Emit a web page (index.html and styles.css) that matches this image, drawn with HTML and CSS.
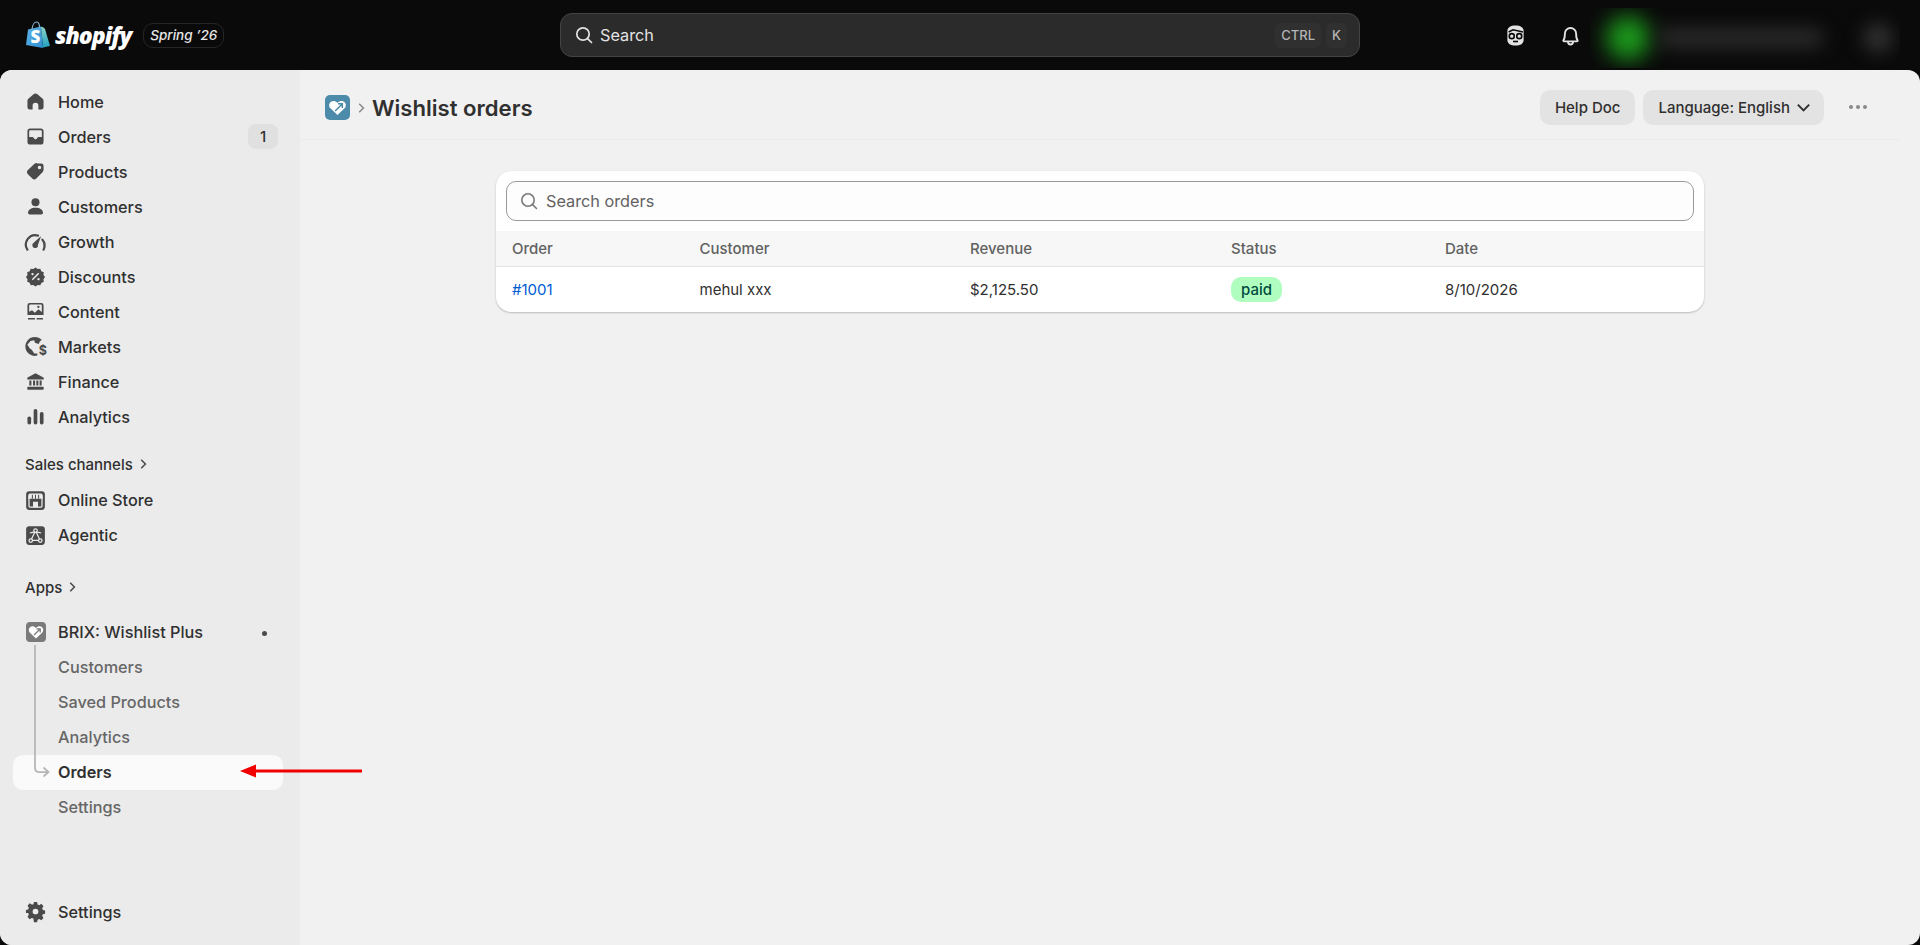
FILE: index.html
```html
<!DOCTYPE html>
<html lang="en">
<head>
    <meta charset="UTF-8">
    <meta name="viewport" content="width=device-width, initial-scale=1.0">
    <title>Wishlist orders</title>
    <link rel="stylesheet" href="styles.css">
</head>
<body>
    <svg class="defs" width="0" height="0">
        <defs>
            <linearGradient id="bagLeft" x1="0" y1="0" x2="1" y2="1">
                <stop offset="0" stop-color="#5fb4e8"/>
                <stop offset="1" stop-color="#2f8fd0"/>
            </linearGradient>
            <linearGradient id="bagRight" x1="0" y1="0" x2="0" y2="1">
                <stop offset="0" stop-color="#8fd6c8"/>
                <stop offset="1" stop-color="#1f9fc0"/>
            </linearGradient>
            <symbol id="heart" viewBox="0 0 20 20">
                <path d="M10 16.6 3.9 10.7C2.2 9 2.4 6.2 4.3 4.9c1.7-1.1 4-.7 5.7 1.1 1.7-1.8 4-2.2 5.7-1.1 1.9 1.3 2.1 4.1.4 5.8z" fill="#fff"/>
                <path d="M8 13l6-6M10.5 6.8h3.7v3.7" fill="none" stroke="currentColor" stroke-width="1.3"/>
            </symbol>
        </defs>
    </svg>

    <!-- top bar -->
    <header class="topbar">
        <div class="brand">
            <svg class="bag" viewBox="0 0 24 28">
                <path d="M2 8.5 15 5.5 17 27 0 24z" fill="url(#bagLeft)"/>
                <path d="M15 5.5l2.5 1 1.5 1.5 5 17-7 1.5z" fill="url(#bagRight)"/>
                <path d="M6 8C6.5 4 8.500 1 10.500 1c2 0 3 2.500 3 5.500" fill="none" stroke="#8fb4d0" stroke-width="1.2"/>
                <text x="4.5" y="22" class="bag-s">S</text>
            </svg>
            <span class="wordmark">shopify</span>
            <span class="edition">Spring ’26</span>
        </div>
        <div class="global-search">
            <svg class="ico-18" viewBox="0 0 20 20" fill="none" stroke="#e3e3e3" stroke-width="1.7"><circle cx="9" cy="9" r="6.2"/><path d="M13.6 13.6 17.5 17.5" stroke-linecap="round"/></svg>
            <span class="global-search-text">Search</span>
            <span class="key">CTRL</span>
            <span class="key">K</span>
        </div>
        <div class="top-actions">
            <svg class="top-ico" viewBox="0 0 20 20"><path d="M3.5 6.5C3.5 3.5 6 2 10 2s6.5 1.5 6.5 4.5v7c0 2.8-2.5 4.5-6.5 4.5s-6.500-1.700-6.500-4.500z" fill="#e3e3e3"/><path d="M4.5 7.2 8 5.500l8 1.700" fill="none" stroke="#0a0a0a" stroke-width="1.2"/><circle cx="7" cy="10.5" r="2" fill="none" stroke="#0a0a0a" stroke-width="1.3"/><circle cx="13" cy="10.5" r="2" fill="none" stroke="#0a0a0a" stroke-width="1.3"/><path d="M8 14.8h4" stroke="#0a0a0a" stroke-width="1.3"/></svg>
            <svg class="top-ico" viewBox="0 0 20 20" fill="none" stroke="#e3e3e3" stroke-width="1.5" stroke-linejoin="round"><path d="M4.500 13.500c1-1.200 1-2.500 1-5a4.500 4.500 0 0 1 9 0c0 2.500 0 3.800 1 5 .5.600.2 1.200-.5 1.200H5c-.7 0-1-.6-.5-1.200z"/><path d="M8 15c0 1.300.9 2.200 2 2.200s2-.9 2-2.200"/></svg>
            <div class="account">
                <span class="blur-dot green"></span>
                <span class="blur-name"></span>
                <span class="blur-dot grey"></span>
            </div>
        </div>
    </header>

    <div class="shell">
        <!-- sidebar -->
        <nav class="sidebar">
            <a class="nav-row"><svg class="ico" viewBox="0 0 20 20"><path d="M10 3c-.5 0-1 .2-1.400.5L4 7.300c-.6.500-1 1.300-1 2.100V15a2 2 0 0 0 2 2h2.500v-3.500a2.500 2.500 0 0 1 5 0V17H15a2 2 0 0 0 2-2V9.400c0-.8-.4-1.600-1-2.100l-4.600-3.800c-.4-.3-.9-.5-1.400-.5z"/></svg>Home</a>
            <a class="nav-row"><svg class="ico" viewBox="0 0 20 20"><path fill-rule="evenodd" d="M5.500 3A2.500 2.500 0 0 0 3 5.500v9A2.500 2.500 0 0 0 5.500 17h9a2.500 2.500 0 0 0 2.500-2.500v-9A2.500 2.500 0 0 0 14.500 3zM4.500 10.500v-5a1 1 0 0 1 1-1h9a1 1 0 0 1 1 1v5h-2.700c-.6 0-1 .3-1.300.8l-.3.500a1 1 0 0 1-.9.500H9.700a1 1 0 0 1-.9-.5l-.3-.5c-.3-.5-.7-.8-1.300-.8z"/></svg>Orders<span class="count">1</span></a>
            <a class="nav-row"><svg class="ico" viewBox="0 0 20 20"><path fill-rule="evenodd" d="M11.500 3H15a2 2 0 0 1 2 2v3.500c0 .8-.3 1.500-.9 2.100l-5.400 5.500a2.500 2.500 0 0 1-3.500 0l-3.800-3.800a2.500 2.500 0 0 1 0-3.500l5.500-5.400c.6-.6 1.300-.9 2.100-.9zM13.500 8a1.500 1.500 0 1 0 0-3 1.500 1.500 0 0 0 0 3z"/></svg>Products</a>
            <a class="nav-row"><svg class="ico" viewBox="0 0 20 20"><circle cx="10" cy="6.300" r="3.500"/><path d="M3.500 15.500c0-2.800 2.700-4.500 6.500-4.500s6.500 1.700 6.500 4.500c0 1-.7 1.500-1.500 1.500H5c-.8 0-1.500-.5-1.500-1.500z"/></svg>Customers</a>
            <a class="nav-row"><svg class="ico full" viewBox="0 0 20 20"><path d="M3.500 16.500A7.500 7.500 0 0 1 12 5.300" fill="none" stroke="currentColor" stroke-width="1.800" stroke-linecap="round"/><path d="M15.500 8.500a7.500 7.500 0 0 1 1 8" fill="none" stroke="currentColor" stroke-width="1.800" stroke-linecap="round"/><path d="M14.500 5.500 12 12.500a2.300 2.300 0 1 1-3.500-1.500z"/></svg>Growth</a>
            <a class="nav-row"><svg class="ico full" viewBox="0 0 20 20"><path transform="translate(1.500 1.500) scale(.85)" fill-rule="evenodd" d="M10 1.500l2 1.500 2.500-.3 1 2.300 2.300 1-.3 2.500 1.500 2-1.500 2 .3 2.500-2.300 1-1 2.300-2.500-.3-2 1.500-2-1.500-2.500.3-1-2.300-2.300-1 .3-2.500-1.500-2 1.500-2-.3-2.500 2.300-1 1-2.300 2.500.3zM7.200 8.800a1.100 1.100 0 1 0 0-2.200 1.100 1.100 0 0 0 0 2.200zm5.600 4.800a1.100 1.100 0 1 0 0-2.200 1.100 1.100 0 0 0 0 2.200zM6.500 12.500l1 1 6-6-1-1z"/></svg>Discounts</a>
            <a class="nav-row"><svg class="ico" viewBox="0 0 20 20"><path fill-rule="evenodd" d="M5 2.500h10a2 2 0 0 1 2 2V13H3V4.500a2 2 0 0 1 2-2zM4.500 10.200V5a1 1 0 0 1 1-1h9a1 1 0 0 1 1 1v5.500l-3-2.500-3 3-2.500-2zM12.500 7a1 1 0 1 0 0-2 1 1 0 0 0 0 2z"/><path d="M3.500 14.800h6v1.400h-6zM11 14.800h5.500v1.400H11z" transform="translate(0 .8)"/></svg>Content</a>
            <a class="nav-row"><svg class="ico full" viewBox="0 0 20 20"><path d="M9.500 2.500a7.500 7.500 0 1 0 2 14.700v-1.700H9L7 12.500l-1.500-1-2-3L6 5.500l3-.5.500 2 3 1 1-2 1.500-1.500a7.500 7.500 0 0 0-5.500-2z"/><text x="12.500" y="17" class="ico-dollar">$</text></svg>Markets</a>
            <a class="nav-row"><svg class="ico full" viewBox="0 0 20 20"><g transform="translate(1.800 1.800) scale(.82)"><path d="M10 2 2.700 5.800c-.5.300-.7.600-.7 1V8h16V6.800c0-.4-.2-.7-.7-1z"/><path d="M4 9h2v5H4zM7.600 9h2v5h-2zM10.800 9h2v5h-2zM14 9h2v5h-2z"/><rect x="2" y="15" width="16" height="3" rx=".8"/></g></svg>Finance</a>
            <a class="nav-row"><svg class="ico" viewBox="0 0 20 20"><rect x="3" y="10" width="3.200" height="7" rx="1.500"/><rect x="8.400" y="3.500" width="3.200" height="13.500" rx="1.500"/><rect x="13.800" y="6" width="3.200" height="11" rx="1.500"/></svg>Analytics</a>

            <div class="nav-heading first">Sales channels<svg class="chev" viewBox="0 0 10 10"><path d="M3.500 1.500 7 5 3.500 8.500"/></svg></div>
            <a class="nav-row"><svg class="ico full" viewBox="0 0 20 20"><rect x="2.500" y="2.500" width="15" height="15" rx="2.500"/><rect x="4.800" y="4.800" width="10.400" height="10.400" rx=".8" fill="none" stroke="#ebebeb" stroke-width="1"/><path d="M4.800 5h10.400l.8 3.500H4z" fill="#ebebeb"/><path d="M7.500 5.500v3M10 5.500v3M12.500 5.500v3" stroke="#4a4a4a" stroke-width=".8"/><rect x="8" y="11" width="4" height="4.500" fill="#ebebeb"/></svg>Online Store</a>
            <a class="nav-row"><svg class="ico full" viewBox="0 0 20 20"><rect x="2.500" y="2.500" width="15" height="15" rx="2.500"/><path d="M10 6.200 6.300 13.800h7.400z" fill="none" stroke="#ebebeb" stroke-width="1"/><path d="M5.500 8c2-1 7-1 9 0" fill="none" stroke="#ebebeb" stroke-width=".9"/><circle cx="10" cy="6" r="1.400" fill="#4a4a4a" stroke="#ebebeb"/><circle cx="6.200" cy="14" r="1.400" fill="#4a4a4a" stroke="#ebebeb"/><circle cx="13.800" cy="14" r="1.400" fill="#4a4a4a" stroke="#ebebeb"/></svg>Agentic</a>

            <div class="nav-heading second">Apps<svg class="chev" viewBox="0 0 10 10"><path d="M3.500 1.500 7 5 3.500 8.500"/></svg></div>
            <a class="nav-row app-row">
                <span class="app-ico"><svg viewBox="0 0 20 20"><use href="#heart"/></svg></span>
                BRIX: Wishlist Plus
                <span class="pin-dot"></span>
            </a>
            <div class="subnav">
                <svg class="tree" viewBox="0 0 20 132"><path d="M7 0V123c0 3 1 4 4 4h9M15.500 122.500l5 4.500-5 4.500"/></svg>
                <a class="sub-row">Customers</a>
                <a class="sub-row">Saved Products</a>
                <a class="sub-row">Analytics</a>
                <a class="sub-row active">Orders</a>
                <a class="sub-row">Settings</a>
            </div>

            <a class="nav-row bottom"><svg class="ico full" viewBox="0 0 20 20"><path transform="translate(1.500 1.500) scale(.85)" fill-rule="evenodd" d="M8.500 1h3l.5 2.300 1.500.7 2-1.200 2 2.200-1.200 2 .6 1.500 2.100.5v3l-2.100.5-.6 1.500 1.200 2-2 2.200-2-1.200-1.500.7-.5 2.300h-3L8 16.700 6.500 16l-2 1.200-2-2.200 1.200-2-.6-1.500L1 11.500v-3l2.100-.5.6-1.500-1.200-2 2-2.200 2 1.200L8 3.300zM10 12.700a2.700 2.700 0 1 0 0-5.400 2.700 2.700 0 0 0 0 5.400z"/></svg>Settings</a>
        </nav>

        <!-- page -->
        <main class="main">
            <div class="page-head">
                <span class="crumb-ico"><svg viewBox="0 0 20 20"><use href="#heart"/></svg></span>
                <svg class="crumb-chev" viewBox="0 0 10 10"><path d="M3.500 1.500 7 5 3.500 8.500"/></svg>
                <h1>Wishlist orders</h1>
                <div class="head-actions">
                    <button class="btn">Help Doc</button>
                    <button class="btn lang">Language: English<svg viewBox="0 0 12 12"><path d="M2 4l4 4 4-4"/></svg></button>
                    <span class="more"><i></i><i></i><i></i></span>
                </div>
            </div>

            <section class="card">
                <div class="search-wrap">
                    <div class="search-box">
                        <svg viewBox="0 0 20 20"><circle cx="9" cy="9" r="6.2"/><path d="M13.6 13.6 17.5 17.5" stroke-linecap="round"/></svg>
                        Search orders
                    </div>
                </div>
                <table class="orders">
                    <thead>
                        <tr><th>Order</th><th>Customer</th><th>Revenue</th><th>Status</th><th>Date</th></tr>
                    </thead>
                    <tbody>
                        <tr>
                            <td><a class="order-link">#1001</a></td>
                            <td>mehul xxx</td>
                            <td>$2,125.50</td>
                            <td><span class="badge">paid</span></td>
                            <td>8/10/2026</td>
                        </tr>
                    </tbody>
                </table>
            </section>
        </main>
    </div>

    <!-- annotation arrow -->
    <svg class="callout" viewBox="0 0 122 14"><path d="M0 7 16 .5V5.500H122V8.500H16V13.500z"/></svg>
</body>
</html>
```
FILE: styles.css
```css
* {
    box-sizing: border-box;
}
html, body {
    margin: 0;
    height: 100%;
}
body {
    height: 100vh;
    overflow: hidden;
    display: flex;
    flex-direction: column;
    background: #0a0a0a;
    color: #303030;
    font-family: Inter, "Noto Sans", sans-serif;
    font-size: 16.25px;
    font-weight: 500;
}
.defs {
    position: absolute;
}

/* top bar */
.topbar {
    height: 70px;
    flex: none;
    display: flex;
    align-items: center;
    position: relative;
    padding-left: 26px;
}
.brand {
    width: 534px;
    display: flex;
    align-items: center;
}
.bag {
    width: 24px;
    height: 28px;
    margin-top: -1px;
}
.bag-s {
    font-family: "Open Sans", sans-serif;
    font-size: 17px;
    font-weight: 800;
    fill: #fff;
}
.wordmark {
    margin-left: 5px;
    color: #fff;
    font-family: "Open Sans", sans-serif;
    font-size: 23px;
    font-weight: 800;
    font-style: italic;
    letter-spacing: -1px;
    line-height: 30px;
}
.edition {
    margin-left: 12px;
    height: 25px;
    padding: 0 6px;
    display: flex;
    align-items: center;
    border: 1px solid #262626;
    border-radius: 10px;
    color: #e8e8e8;
    font-size: 13.5px;
    font-style: italic;
}
.global-search {
    width: 800px;
    height: 44px;
    display: flex;
    align-items: center;
    padding: 0 12px 0 13px;
    background: #2b2b2b;
    border: 1px solid #444;
    border-radius: 12px;
    color: #e3e3e3;
}
.ico-18 {
    width: 20px;
    height: 20px;
}
.global-search-text {
    margin-left: 6px;
    margin-right: auto;
    font-weight: 400;
}
.key {
    height: 25px;
    padding: 0 6px;
    margin-left: 5px;
    display: flex;
    align-items: center;
    background: #303030;
    border-radius: 6px;
    color: #b5b5b5;
    font-size: 13px;
}
.top-actions {
    flex: 1;
    display: flex;
    align-items: center;
    padding-left: 143px;
}
.top-ico {
    width: 25px;
    height: 25px;
    margin-right: 30px;
}
.account {
    position: absolute;
    left: 1590px;
    top: 8px;
    width: 310px;
    height: 60px;
    overflow: hidden;
}
.blur-dot, .blur-name {
    position: absolute;
    filter: blur(9px);
    border-radius: 50%;
}
.blur-dot.green {
    left: 16px;
    top: 8px;
    width: 44px;
    height: 44px;
    background: #1c9c1c;
    filter: blur(11px);
}
.blur-dot.grey {
    left: 273px;
    top: 15px;
    width: 30px;
    height: 30px;
    background: #303030;
}
.blur-name {
    left: 68px;
    top: 20px;
    width: 165px;
    height: 20px;
    background: #2a2a2a;
    border-radius: 8px;
}

/* shell */
.shell {
    flex: 1;
    display: flex;
    min-height: 0;
    border-radius: 12px;
    overflow: hidden;
    background: #f1f1f1;
}

/* sidebar */
.sidebar {
    width: 300px;
    flex: none;
    display: flex;
    flex-direction: column;
    padding: 14px 17px 16px 13px;
    background: #ebebeb;
}
.nav-row {
    height: 35px;
    flex: none;
    display: flex;
    align-items: center;
    padding: 0 5px 0 10px;
    color: #303030;
}
.ico {
    width: 25px;
    height: 25px;
    flex: none;
    margin-right: 10px;
    padding: 1px;
    fill: #4a4a4a;
    color: #4a4a4a;
}
.ico.full {
    padding: 0;
}
.ico-dollar {
    font-size: 10px;
    font-weight: 700;
}
.count {
    margin-left: auto;
    width: 30px;
    height: 25px;
    display: flex;
    align-items: center;
    justify-content: center;
    background: #e0e0e0;
    border-radius: 8px;
    font-size: 15px;
}
.nav-heading {
    height: 35px;
    flex: none;
    display: flex;
    align-items: center;
    padding-left: 12px;
    font-size: 15px;
}
.nav-heading.first {
    margin-top: 12.5px;
    margin-bottom: 1px;
}
.nav-heading.second {
    margin-top: 17px;
    margin-bottom: 10px;
}
.chev {
    width: 12px;
    height: 12px;
    margin-left: 4px;
    fill: none;
    stroke: #4a4a4a;
    stroke-width: 1.3;
}
.app-ico {
    width: 20px;
    height: 20px;
    margin: 0 12.5px 0 2.5px;
    border-radius: 4px;
    background: #7a7a7a;
    color: #7a7a7a;
    display: flex;
}
.pin-dot {
    width: 5px;
    height: 5px;
    margin: 2px 11px 0 auto;
    border-radius: 50%;
    background: #4a4a4a;
}
.subnav {
    position: relative;
    display: flex;
    flex-direction: column;
}
.sub-row {
    height: 35px;
    display: flex;
    align-items: center;
    padding-left: 45px;
    color: #666;
}
.sub-row.active {
    background: #fafafa;
    border-radius: 10px;
    color: #303030;
    font-weight: 600;
}
.tree {
    position: absolute;
    left: 15px;
    top: -5px;
    width: 20px;
    height: 132px;
    z-index: 1;
    overflow: visible;
    fill: none;
    stroke: #b5b5b5;
    stroke-width: 1.75;
}
.bottom {
    margin-top: auto;
}

/* page */
.main {
    flex: 1;
    padding-right: 20px;
}
.page-head {
    height: 70px;
    display: flex;
    align-items: center;
    padding: 6px 0 0 25px;
    border-bottom: 1px solid #ebebeb;
}
.crumb-ico {
    width: 25px;
    height: 25px;
    padding: 1px;
    border-radius: 5px;
    background: #4d8bab;
    color: #4d8bab;
    display: flex;
}
.crumb-chev {
    width: 12px;
    height: 12px;
    margin: 0 5px 0 5px;
    fill: none;
    stroke: #8a8a8a;
    stroke-width: 1.3;
}
h1 {
    margin: 0;
    font-size: 22.1px;
    font-weight: 600;
}
.head-actions {
    margin-left: auto;
    margin-top: -1px;
    display: flex;
    align-items: center;
    gap: 8px;
    padding-right: 33px;
}
.btn {
    height: 35px;
    padding: 0 15px;
    display: flex;
    align-items: center;
    border: 0;
    border-radius: 10px;
    background: #e3e3e3;
    color: #303030;
    font-family: inherit;
    font-size: 15px;
    font-weight: 500;
}
.btn.lang {
    padding-right: 12px;
}
.btn svg {
    width: 17px;
    height: 17px;
    margin-left: 5px;
    fill: none;
    stroke: #303030;
    stroke-width: 1.4;
}
.more {
    display: flex;
    gap: 3px;
    margin-left: 17px;
}
.more i {
    width: 4px;
    height: 4px;
    border-radius: 50%;
    background: #8a8a8a;
}

/* card */
.card {
    width: 1208px;
    margin: 31px auto 0;
    background: #fff;
    border-radius: 15px;
    overflow: hidden;
    box-shadow: 0 1px 2px rgba(0,0,0,0.22), 0 0 1px rgba(0,0,0,0.08);
}
.search-wrap {
    padding: 10px;
}
.search-box {
    height: 40px;
    display: flex;
    align-items: center;
    padding-left: 12px;
    background: #fdfdfd;
    border: 1px solid #9a9a9a;
    border-radius: 10px;
    color: #616161;
    font-size: 16.25px;
    font-weight: 400;
}
.search-box svg {
    width: 20px;
    height: 20px;
    margin-right: 7px;
    fill: none;
    stroke: #7a7a7a;
    stroke-width: 1.6;
}
.orders {
    width: 100%;
    border-collapse: collapse;
    table-layout: fixed;
    font-size: 15px;
}
.orders th {
    height: 35px;
    padding: 0 0 0 16px;
    background: #f7f7f7;
    border-bottom: 1px solid #e3e3e3;
    color: #616161;
    font-weight: 500;
    text-align: left;
}
.orders td {
    height: 46px;
    padding: 0 0 0 16px;
    color: #303030;
    font-weight: 400;
}
.orders th:nth-child(1) { width: 187.5px; }
.orders th:nth-child(2) { width: 270.5px; }
.orders th:nth-child(3) { width: 261px; }
.orders th:nth-child(4) { width: 214px; }
.order-link {
    color: #005bd3;
}
.badge {
    display: inline-flex;
    align-items: center;
    height: 25px;
    padding: 0 10px;
    border-radius: 10px;
    background: #affebf;
    color: #014b40;
    font-weight: 500;
}

/* annotation */
.callout {
    position: absolute;
    left: 240px;
    top: 764px;
    width: 122px;
    height: 14px;
    fill: #f00000;
}
```
